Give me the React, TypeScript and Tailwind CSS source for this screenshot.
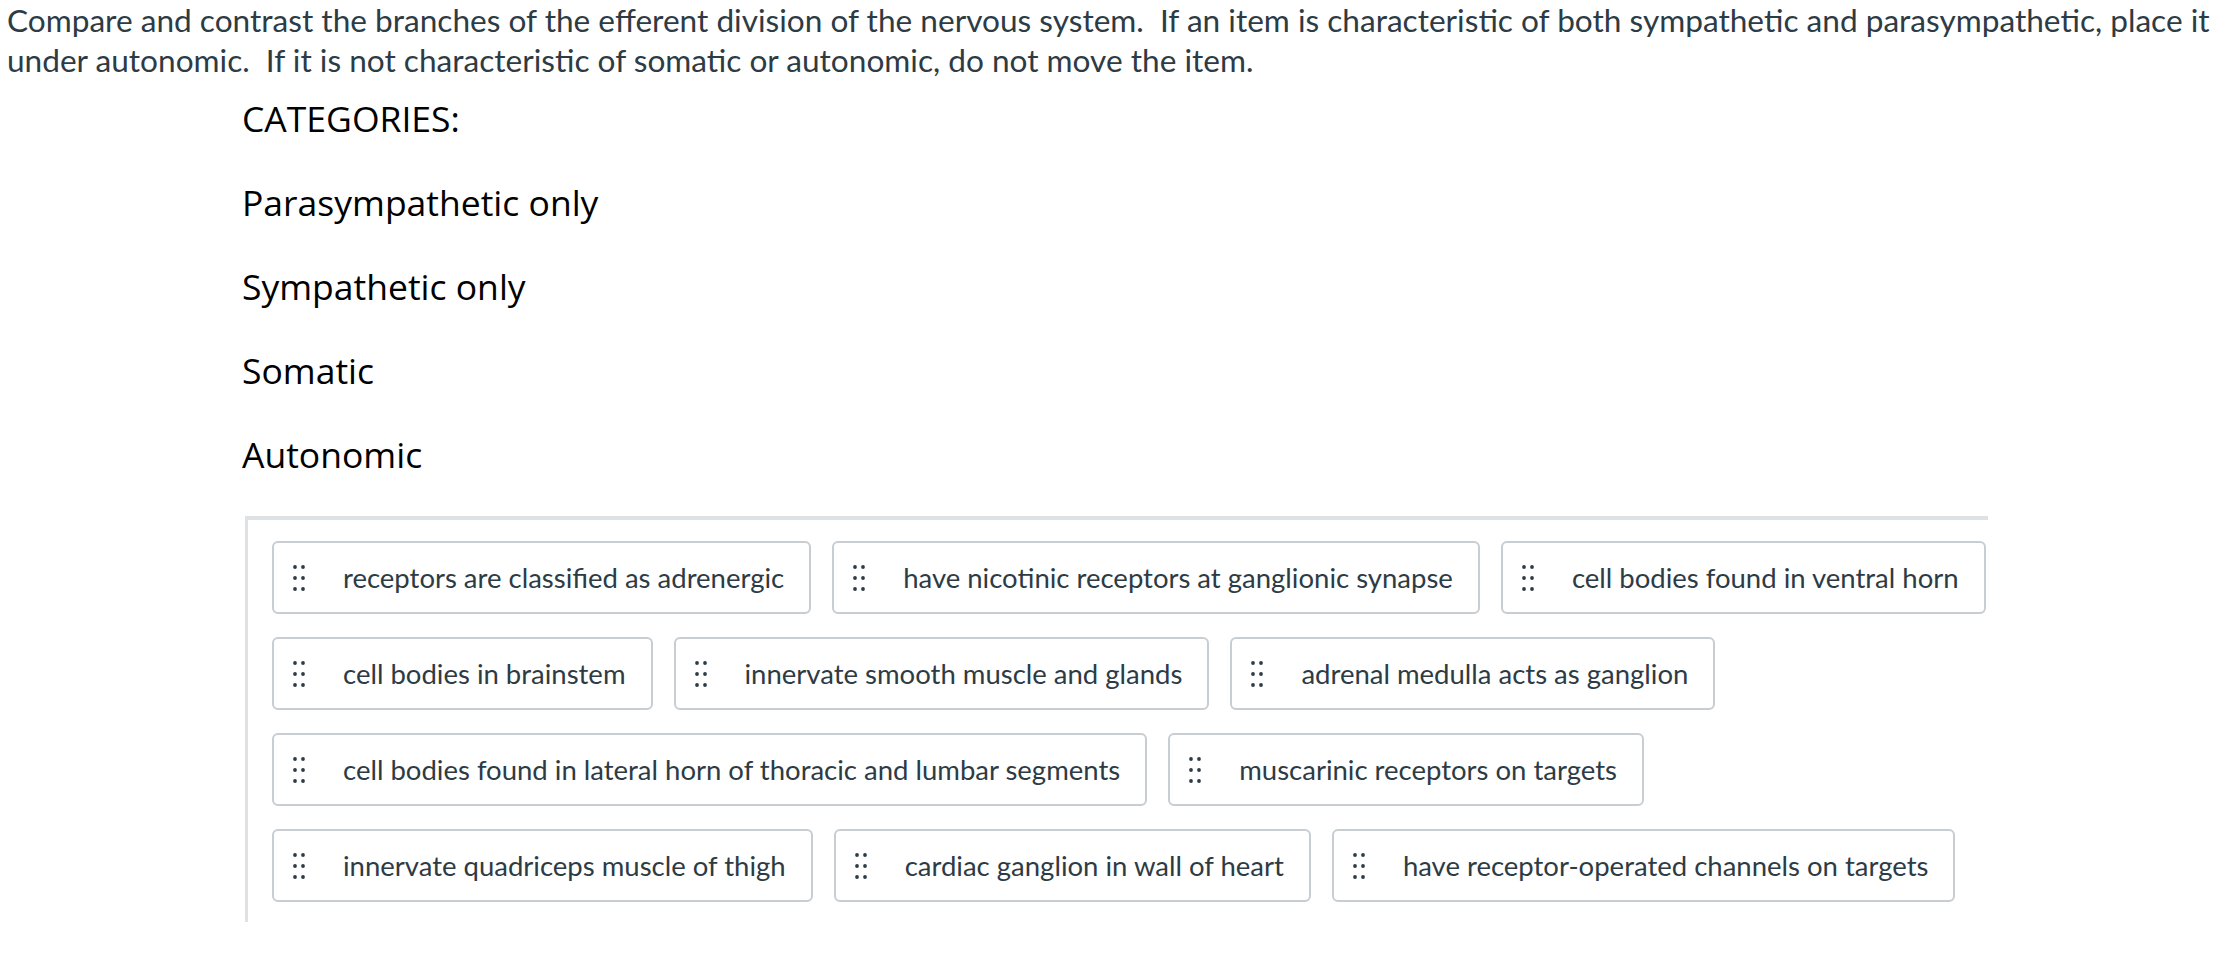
import React from "react";

const rows: string[][] = [
  [
    "receptors are classified as adrenergic",
    "have nicotinic receptors at ganglionic synapse",
    "cell bodies found in ventral horn",
  ],
  [
    "cell bodies in brainstem",
    "innervate smooth muscle and glands",
    "adrenal medulla acts as ganglion",
  ],
  [
    "cell bodies found in lateral horn of thoracic and lumbar segments",
    "muscarinic receptors on targets",
  ],
  [
    "innervate quadriceps muscle of thigh",
    "cardiac ganglion in wall of heart",
    "have receptor-operated channels on targets",
  ],
];

function Dots() {
  return (
    <svg width="12" height="26" viewBox="0 0 12 26" className="shrink-0">
      {[2, 13, 24].map((cy) =>
        [2, 10].map((cx) => (
          <circle key={`${cx}-${cy}`} cx={cx} cy={cy} r="1.9" fill="#2d3b45" />
        ))
      )}
    </svg>
  );
}

function Chip({ text }: { text: string }) {
  return (
    <div className="flex h-[73px] items-center rounded-[6px] border-2 border-[#c7cdd1] bg-white pl-[19px] pr-[25px]">
      <Dots />
      <span className="ml-[38px] whitespace-nowrap text-[27.5px] text-[#2d3b45]">{text}</span>
    </div>
  );
}

export default function App() {
  return (
    <div className="min-h-[960px] w-[2230px] bg-white font-['Lato',sans-serif]">
      <div className="pl-[7px] text-[31.6px] leading-[40px] text-[#2d3b45]">
        <div className="whitespace-nowrap">
          Compare and contrast the branches of the efferent division of the nervous system.&nbsp; If an item is
          characteristic of both sympathetic and parasympathetic, place it
        </div>
        <div className="whitespace-nowrap">
          under autonomic.&nbsp; If it is not characteristic of somatic or autonomic, do not move the item.
        </div>
      </div>

      <div className="mt-[-4px] pl-[242px] font-['Open_Sans',sans-serif] text-[35.5px] leading-[84px] text-black">
        <div>CATEGORIES:</div>
        <div>Parasympathetic only</div>
        <div>Sympathetic only</div>
        <div>Somatic</div>
        <div>Autonomic</div>
      </div>

      <div className="ml-[245px] mt-[20px] flex w-[1743px] flex-col gap-[23px] border-l-[3px] border-t-4 border-[#dfe2e4] pb-[20px] pl-[24px] pt-[21px]">
        {rows.map((row, i) => (
          <div key={i} className="flex gap-[21px]">
            {row.map((t) => (
              <Chip key={t} text={t} />
            ))}
          </div>
        ))}
      </div>
    </div>
  );
}
